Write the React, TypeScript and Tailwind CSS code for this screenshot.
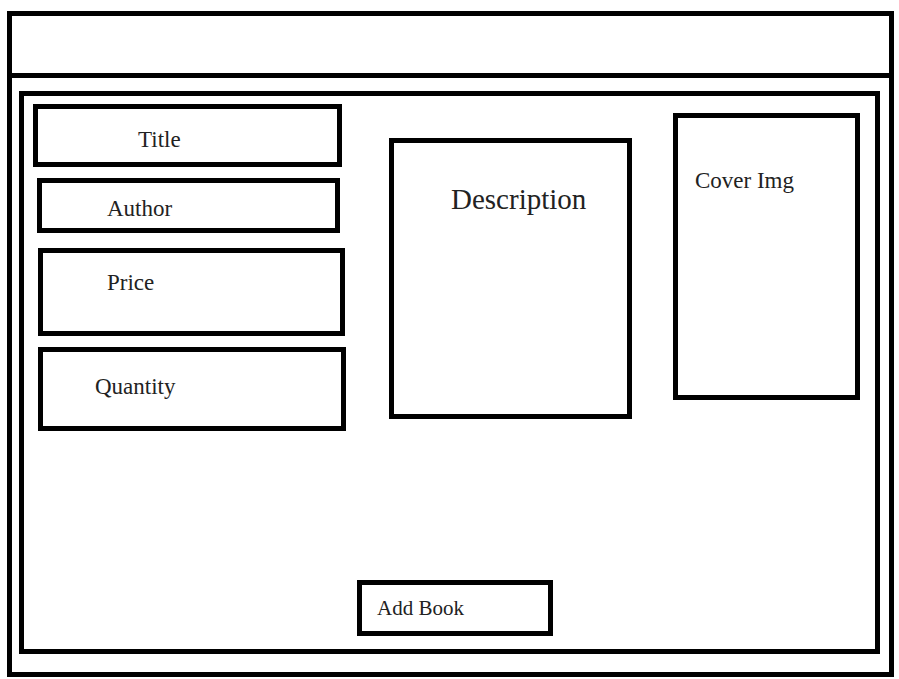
import React from "react";

export default function App() {
  const serif = { fontFamily: '"Liberation Serif", "Times New Roman", serif' };
  return (
    <div className="w-[899px] h-[679px] bg-white overflow-hidden pt-[11px] pl-[7px]" style={serif}>
      <div className="w-[887px] h-[666px] border-[5px] border-black flex flex-col">
        <header className="h-[62px] border-b-[5px] border-black shrink-0" />
        <main className="mt-[13px] ml-[7px] w-[861px] h-[563px] border-[5px] border-black flex flex-col text-[#222]">
          <div className="flex items-start">
            <div className="flex flex-col pt-[8px]">
              <div className="ml-[9px] w-[309px] h-[63px] border-[5px] border-black pt-[18px] pl-[100px] text-[23px] leading-[26px]">
                Title
              </div>
              <div className="ml-[13px] mt-[11px] w-[303px] h-[55px] border-[5px] border-black pt-[13px] pl-[65px] text-[23px] leading-[26px]">
                Author
              </div>
              <div className="ml-[14px] mt-[15px] w-[307px] h-[88px] border-[5px] border-black pt-[17px] pl-[64px] text-[23px] leading-[26px]">
                Price
              </div>
              <div className="ml-[14px] mt-[11px] w-[308px] h-[84px] border-[5px] border-black pt-[22px] pl-[52px] text-[23px] leading-[26px]">
                Quantity
              </div>
            </div>
            <div className="ml-[43px] mt-[42px] w-[243px] h-[281px] border-[5px] border-black pt-[40px] pl-[57px] text-[29px] leading-[33px]">
              Description
            </div>
            <div className="ml-[41px] mt-[17px] w-[187px] h-[287px] border-[5px] border-black pt-[50px] pl-[17px] text-[23px] leading-[26px]">
              Cover Img
            </div>
          </div>
          <div
            role="button"
            className="ml-[333px] mt-[149px] w-[196px] h-[56px] border-[5px] border-black pt-[11px] pl-[15px] text-[21px] leading-[24px] self-start cursor-pointer"
          >
            Add Book
          </div>
        </main>
      </div>
    </div>
  );
}
